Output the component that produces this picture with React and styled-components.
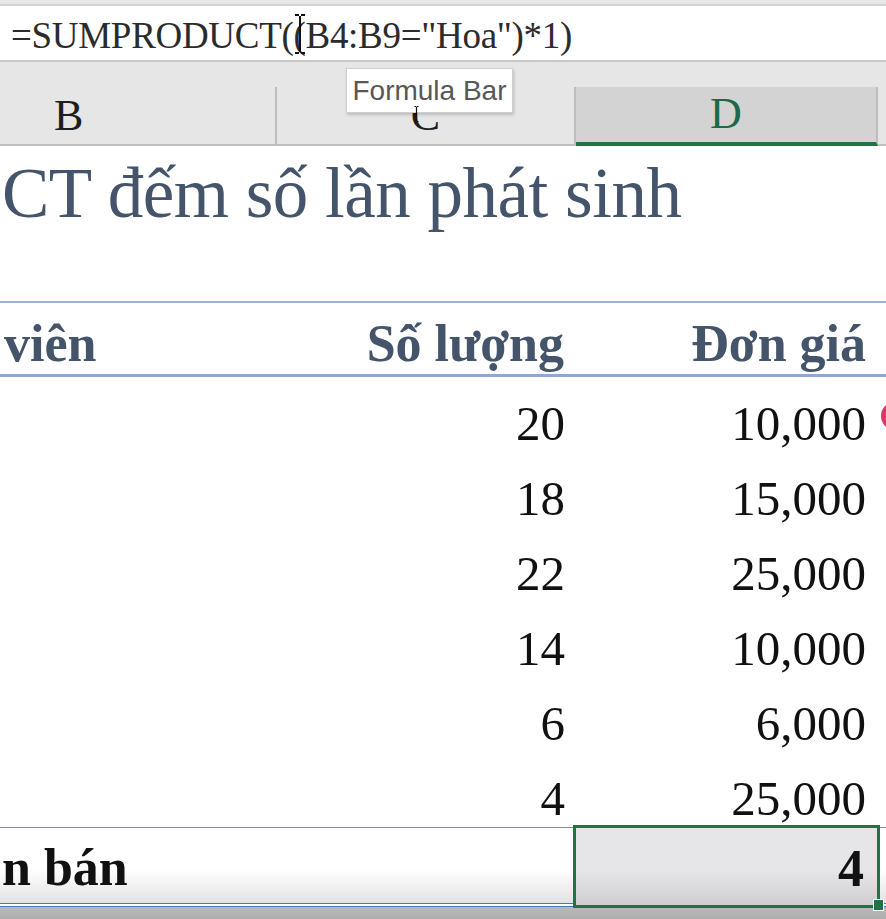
import React from "react";
import styled, { createGlobalStyle } from "styled-components";

const GlobalStyle = createGlobalStyle`
  html, body {
    margin: 0;
    padding: 0;
    background: #ffffff;
    overflow: hidden;
  }
`;

const COLS = "277px 299px 302px 1fr";

const rows = [
  { qty: 20, price: "10,000" },
  { qty: 18, price: "15,000" },
  { qty: 22, price: "25,000" },
  { qty: 14, price: "10,000" },
  { qty: 6, price: "6,000" },
  { qty: 4, price: "25,000" },
];

const App = () => {
  return (
    <>
      <GlobalStyle />
      <Screen>
        <TopStrip />
        <FormulaBar>=SUMPRODUCT((B4:B9="Hoa")*1)</FormulaBar>
        <HeaderGap />
        <ColumnHeaders>
          <ColHead $align="start">B</ColHead>
          <ColHead>C</ColHead>
          <ColHead $selected>D</ColHead>
          <ColHead $last />
        </ColumnHeaders>

        <Sheet>
          <TitleRow>
            <Title>CT đếm số lần phát sinh</Title>
          </TitleRow>

          <HeaderRow>
            <HeadCell $align="start">viên</HeadCell>
            <HeadCell>Số lượng</HeadCell>
            <HeadCell>Đơn giá</HeadCell>
            <HeadCell />
          </HeaderRow>

          {rows.map((r, i) => (
            <DataRow key={i}>
              <Cell />
              <Cell>{r.qty}</Cell>
              <Cell>{r.price}</Cell>
              <Cell />
            </DataRow>
          ))}

          <TotalRow>
            <TotalCell $align="start">n bán</TotalCell>
            <TotalCell />
            <ActiveCell>
              4
              <FillHandle />
            </ActiveCell>
            <TotalCell />
          </TotalRow>
        </Sheet>
        <BottomShade />

        <Tooltip>Formula Bar</Tooltip>
        <TextCursor viewBox="0 0 12 40" $left={294} $top={14} $w={12} $h={40}>
          <path d="M1 1 H5 M7 1 H11 M6 2 V38 M1 39 H5 M7 39 H11" stroke="#111" strokeWidth="2" fill="none" />
        </TextCursor>
        <TextCursor viewBox="0 0 12 40" $left={413} $top={106} $w={7} $h={16}>
          <path d="M1 1 H5 M7 1 H11 M6 2 V38 M1 39 H5 M7 39 H11" stroke="#111" strokeWidth="3" fill="none" />
        </TextCursor>
        <Marker />
      </Screen>
    </>
  );
};

const Screen = styled.div`
  position: relative;
  width: 886px;
  height: 919px;
  overflow: hidden;
  background: #ffffff;
  font-family: "Liberation Serif", "Times New Roman", serif;
`;

const TopStrip = styled.div`
  height: 4px;
  background: #e8e8e8;
  border-bottom: 2px solid #d2d2d2;
`;

const FormulaBar = styled.div`
  height: 56px;
  display: flex;
  align-items: center;
  padding: 5px 0 0 11px;
  box-sizing: border-box;
  background: #ffffff;
  border-bottom: 2px solid #c8c8c8;
  font-size: 37px;
  color: #2b2b2b;
  white-space: nowrap;
  letter-spacing: -0.3px;
`;

const HeaderGap = styled.div`
  height: 25px;
  background: #e6e6e6;
`;

const ColumnHeaders = styled.div`
  display: grid;
  grid-template-columns: ${COLS};
  height: 59px;
  background: #e6e6e6;
`;

const ColHead = styled.div`
  display: flex;
  align-items: flex-end;
  justify-content: ${(p) => (p.$align === "start" ? "flex-start" : "center")};
  padding-left: ${(p) => (p.$align === "start" ? "54px" : "0")};
  padding-bottom: 6px;
  box-sizing: border-box;
  font-size: 44px;
  line-height: 1;
  color: ${(p) => (p.$selected ? "#1d6a47" : "#1e1e1e")};
  background: ${(p) => (p.$selected ? "#d3d3d3" : "#e6e6e6")};
  border-right: ${(p) => (p.$last ? "none" : "2px solid #bdbdbd")};
  border-bottom: ${(p) => (p.$selected ? "4px solid #217346" : "2px solid #bfbfbf")};
`;

const Sheet = styled.div`
  display: grid;
  grid-template-columns: ${COLS};
`;

const TitleRow = styled.div`
  grid-column: 1 / -1;
  height: 155px;
  padding: 12px 0 0 2px;
  box-sizing: border-box;
`;

const Title = styled.div`
  font-size: 71px;
  line-height: 1;
  color: #44546a;
  white-space: nowrap;
  letter-spacing: -0.5px;
`;

const RowBase = styled.div`
  display: grid;
  grid-column: 1 / -1;
  grid-template-columns: subgrid;
`;

const HeaderRow = styled(RowBase)`
  height: 76px;
  box-sizing: border-box;
  border-top: 2px solid #9fb2d9;
  border-bottom: 3px solid #8fa6d6;
`;

const HeadCell = styled.div`
  display: flex;
  align-items: flex-end;
  justify-content: ${(p) => (p.$align === "start" ? "flex-start" : "flex-end")};
  padding: 0 12px 4px 4px;
  font-size: 52px;
  font-weight: 700;
  line-height: 1;
  color: #44546a;
  white-space: nowrap;
`;

const DataRow = styled(RowBase)`
  height: 75px;
`;

const Cell = styled.div`
  display: flex;
  align-items: flex-end;
  justify-content: flex-end;
  padding: 0 12px 4px 0;
  font-size: 49px;
  line-height: 1;
  color: #111111;
  &:nth-child(2) {
    padding-right: 11px;
  }
`;

const TotalRow = styled(RowBase)`
  height: 80px;
  box-sizing: border-box;
  border-top: 1px solid #6f8fcf;
  border-bottom: 4px double #4f72c0;
  background: linear-gradient(to bottom, #ffffff 55%, #e2e2e2 100%);
`;

const TotalCell = styled.div`
  display: flex;
  align-items: flex-end;
  justify-content: flex-start;
  padding: 0 0 9px 2px;
  font-size: 52px;
  font-weight: 700;
  line-height: 1;
  color: #111111;
  white-space: nowrap;
`;

const ActiveCell = styled.div`
  position: relative;
  display: flex;
  align-items: flex-end;
  justify-content: flex-end;
  margin: -3px -2px -5px -3px;
  padding: 0 13px 10px 0;
  border: 3px solid #217346;
  background: linear-gradient(to bottom, #e6e6e8 55%, #cfcfd1 100%);
  font-size: 52px;
  font-weight: 700;
  line-height: 1;
  color: #111111;
`;

const FillHandle = styled.span`
  position: absolute;
  right: -7px;
  bottom: -6px;
  width: 9px;
  height: 10px;
  background: #217346;
  border: 1px solid #ffffff;
`;

const BottomShade = styled.div`
  height: 20px;
  background: linear-gradient(to bottom, #b9b9b9, #a6a6a6);
`;

const Tooltip = styled.div`
  position: absolute;
  left: 346px;
  top: 68px;
  width: 167px;
  height: 45px;
  box-sizing: border-box;
  display: flex;
  align-items: center;
  justify-content: center;
  background: #ffffff;
  border: 1px solid #cfcfcf;
  box-shadow: 1px 2px 3px rgba(0, 0, 0, 0.18);
  font-family: "Liberation Sans", Arial, sans-serif;
  font-size: 28px;
  color: #575757;
  white-space: nowrap;
`;

const TextCursor = styled.svg`
  position: absolute;
  left: ${(p) => p.$left}px;
  top: ${(p) => p.$top}px;
  width: ${(p) => p.$w}px;
  height: ${(p) => p.$h}px;
`;

const Marker = styled.div`
  position: absolute;
  left: 881px;
  top: 402px;
  width: 28px;
  height: 28px;
  border-radius: 50%;
  background: #d9386a;
`;

export default App;
